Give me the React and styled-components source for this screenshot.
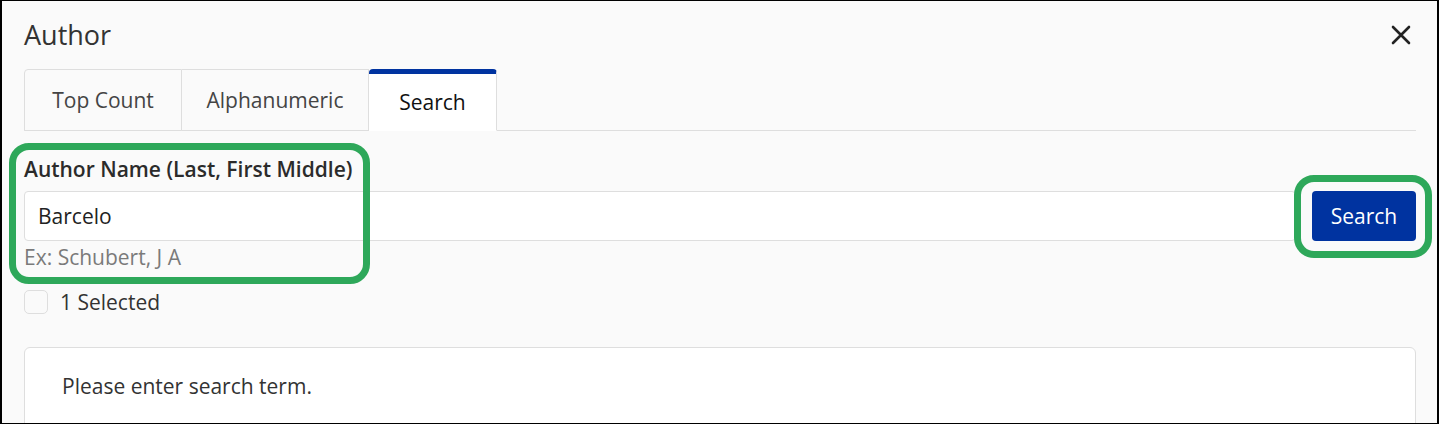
import React from "react";
import styled, { createGlobalStyle } from "styled-components";

const Global = createGlobalStyle`
  * { box-sizing: border-box; }
  html, body { margin: 0; padding: 0; background: #fafafa; }
  body { font-family: "Open Sans", "Noto Sans", sans-serif; color: #333; }
`;

const Frame = styled.div`
  position: relative;
  width: 1439px;
  height: 424px;
  overflow: hidden;
  background: #fafafa;
  border-style: solid;
  border-color: #000;
  border-width: 1px 2px 1px 2px;
  padding: 16px 21px 0 22px;
`;

const Header = styled.div`
  display: flex;
  align-items: center;
  justify-content: space-between;
  height: 36px;
`;

const Title = styled.h1`
  margin: 0;
  font-size: 27px;
  line-height: 36px;
  font-weight: 400;
  color: #333;
`;

const CloseButton = styled.button`
  display: flex;
  align-items: center;
  justify-content: center;
  width: 24px;
  height: 24px;
  padding: 0;
  margin-right: 3px;
  border: none;
  background: none;
  color: #222;
`;

const TabList = styled.div`
  display: flex;
  margin-top: 16px;
  border-bottom: 1px solid #dedede;
`;

const Tab = styled.div`
  width: ${(p) => p.$w}px;
  height: 62px;
  margin-bottom: -1px;
  display: flex;
  align-items: center;
  justify-content: center;
  font-size: 21px;
  color: ${(p) => (p.$active ? "#111" : "#444")};
  background: ${(p) => (p.$active ? "#fff" : "#fafafa")};
  border: 1px solid #dedede;
  border-left-width: ${(p) => (p.$first ? "1px" : "0")};
  border-top: ${(p) => (p.$active ? "5px solid #0033a0" : "1px solid #dedede")};
  border-bottom-color: ${(p) => (p.$active ? "#fff" : "#dedede")};
  border-radius: ${(p) => (p.$active ? "4px 4px 0 0" : p.$first ? "4px 0 0 0" : "0")};
`;

const Label = styled.label`
  display: block;
  margin-top: 24px;
  font-size: 21px;
  line-height: 28px;
  font-weight: 600;
  color: #2b2b2b;
`;

const SearchRow = styled.div`
  display: flex;
  gap: 16px;
  margin-top: 8px;
`;

const Input = styled.input`
  flex: 1;
  height: 50px;
  padding: 0 13px;
  font-family: inherit;
  font-size: 21px;
  color: #222;
  background: #fff;
  border: 1px solid #dedede;
  border-radius: 4px;
  outline: none;
`;

const Button = styled.button`
  width: 104px;
  height: 50px;
  font-family: inherit;
  font-size: 21px;
  color: #fff;
  background: #0033a0;
  border: none;
  border-radius: 4px;
`;

const Hint = styled.div`
  margin-top: 2px;
  font-size: 21px;
  line-height: 28px;
  color: #7a7a7a;
`;

const CheckRow = styled.label`
  display: flex;
  align-items: center;
  gap: 12px;
  margin-top: 17px;
  font-size: 21px;
  line-height: 28px;
  color: #333;
`;

const Checkbox = styled.span`
  width: 24px;
  height: 24px;
  border: 1px solid #dedede;
  border-radius: 5px;
  background: #fafafa;
`;

const ResultBox = styled.div`
  margin-top: 31px;
  height: 120px;
  padding: 24px 37px;
  background: #fff;
  border: 1px solid #dedede;
  border-radius: 6px;
  font-size: 21px;
  line-height: 28px;
  color: #333;
`;

const Annotation = styled.div`
  position: absolute;
  left: ${(p) => p.$x}px;
  top: ${(p) => p.$y}px;
  width: ${(p) => p.$w}px;
  height: ${(p) => p.$h}px;
  border: 7px solid #2ea85a;
  border-radius: 20px;
  pointer-events: none;
`;

const CloseIcon = () => (
  <svg width="20" height="20" viewBox="0 0 20 20" fill="none">
    <path d="M2 2 L18 18 M18 2 L2 18" stroke="currentColor" strokeWidth="2.6" strokeLinecap="round" />
  </svg>
);

export default function App() {
  return (
    <>
      <Global />
      <Frame>
        <Header>
          <Title>Author</Title>
          <CloseButton aria-label="Close">
            <CloseIcon />
          </CloseButton>
        </Header>
        <TabList>
          <Tab $first $w={158}>Top Count</Tab>
          <Tab $w={187}>Alphanumeric</Tab>
          <Tab $active $w={128}>Search</Tab>
        </TabList>
        <Label>Author Name (Last, First Middle)</Label>
        <SearchRow>
          <Input defaultValue="Barcelo" />
          <Button>Search</Button>
        </SearchRow>
        <Hint>Ex: Schubert, J A</Hint>
        <CheckRow>
          <Checkbox />
          1 Selected
        </CheckRow>
        <ResultBox>Please enter search term.</ResultBox>
        <Annotation $x={7} $y={142} $w={361} $h={141} />
        <Annotation $x={1292} $y={174} $w={138} $h={83} />
      </Frame>
    </>
  );
}
